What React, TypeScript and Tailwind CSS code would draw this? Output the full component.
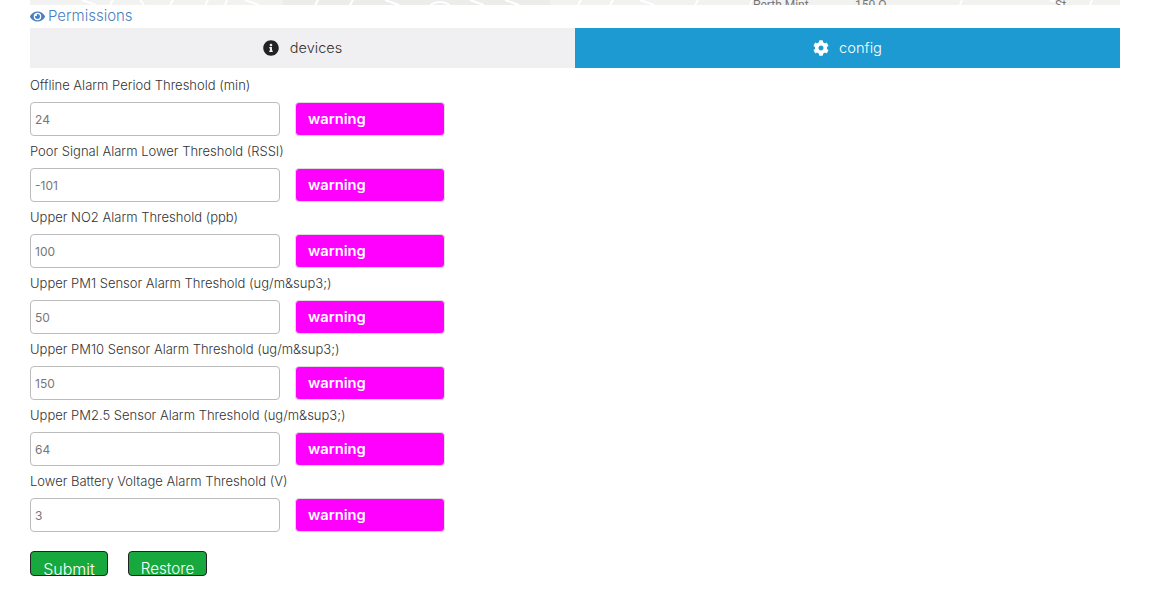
import { FaCog, FaEye, FaInfoCircle } from "react-icons/fa";

const rows = [
  { label: "Offline Alarm Period Threshold (min)", value: "24" },
  { label: "Poor Signal Alarm Lower Threshold (RSSI)", value: "-101" },
  { label: "Upper NO2 Alarm Threshold (ppb)", value: "100" },
  { label: "Upper PM1 Sensor Alarm Threshold (ug/m&sup3;)", value: "50" },
  { label: "Upper PM10 Sensor Alarm Threshold (ug/m&sup3;)", value: "150" },
  { label: "Upper PM2.5 Sensor Alarm Threshold (ug/m&sup3;)", value: "64" },
  { label: "Lower Battery Voltage Alarm Threshold (V)", value: "3" },
];

function MapStrip() {
  return (
    <svg width="1090" height="5" viewBox="0 0 1090 5" className="block">
      <rect width="1090" height="5" fill="#f2f2f0" />
      <rect x="253" width="267" height="5" fill="#ecedeb" />
      <g stroke="#fff" strokeWidth="2" fill="none">
        <path d="M52 0l14 5M80 5l3-5M110 0l4 5M140 5l3-5M175 5l3-5M195 5l2-5M215 0l14 5" />
        <path d="M285 5l3-5M320 5l3-5M355 0l14 5M400 5q10-6 20 0M440 0l14 5M475 0l14 5" />
        <path d="M548 5l3-5M580 5l3-5M610 0l14 5M665 5l3-5M720 5l2-5M930 5l2-5M1020 0l14 5M1060 5l2-5" />
      </g>
      <text x="723" y="9" fontSize="12" fill="#777" fontFamily="Roboto, sans-serif">Perth Mint</text>
      <text x="825" y="9" fontSize="12" fill="#777" fontFamily="Roboto, sans-serif">150 O</text>
      <text x="1025" y="9" fontSize="12" fill="#777" fontFamily="Roboto, sans-serif">St</text>
    </svg>
  );
}

export default function App() {
  return (
    <div className="w-[1150px] h-[615px] overflow-hidden bg-white font-['Inter',sans-serif]">
      <div className="mx-[30px]">
        <MapStrip />
        <a className="flex items-center h-[23px] text-[15px] font-light text-[#4a7fc1]">
          <FaEye size={15} />
          <span className="ml-[3px]">Permissions</span>
        </a>
        <div className="flex h-[40px]">
          <div className="flex-1 flex items-center justify-center gap-[11px] bg-[#f0f0f2] text-[14.5px] font-light text-[#333]">
            <FaInfoCircle size={16} color="#222" />
            devices
          </div>
          <div className="flex-1 flex items-center justify-center gap-[10px] bg-[#1c9ad1] text-[14.7px] font-light text-white">
            <FaCog size={16} />
            config
          </div>
        </div>
        <div className="mt-[7px]">
          {rows.map((row) => (
            <div key={row.label} className="h-[66px]">
              <div className="h-[27px] text-[13px] font-light leading-[20px] text-[#333]">{row.label}</div>
              <div className="flex gap-[15px]">
                <input
                  readOnly
                  value={row.value}
                  className="w-[250px] h-[34px] px-[4px] border border-[#bbb] rounded-[4px] text-[12px] text-[#777] outline-none"
                />
                <div className="w-[150px] h-[34px] flex items-center px-[12px] bg-[#ff00ff] border border-[#ddd] rounded-[4px] text-[14.7px] font-semibold text-white">
                  warning
                </div>
              </div>
            </div>
          ))}
        </div>
        <div className="flex gap-[20px] mt-[14px]">
          <button className="w-[78px] h-[25px] pt-[7px] bg-[#17a83e] border border-[#222] rounded-[4px] text-[16px] font-light leading-[20px] text-white overflow-hidden">Submit</button>
          <button className="w-[79px] h-[25px] pt-[7px] bg-[#17a83e] border border-[#222] rounded-[4px] text-[15.2px] font-light leading-[20px] text-white overflow-hidden">Restore</button>
        </div>
      </div>
    </div>
  );
}
